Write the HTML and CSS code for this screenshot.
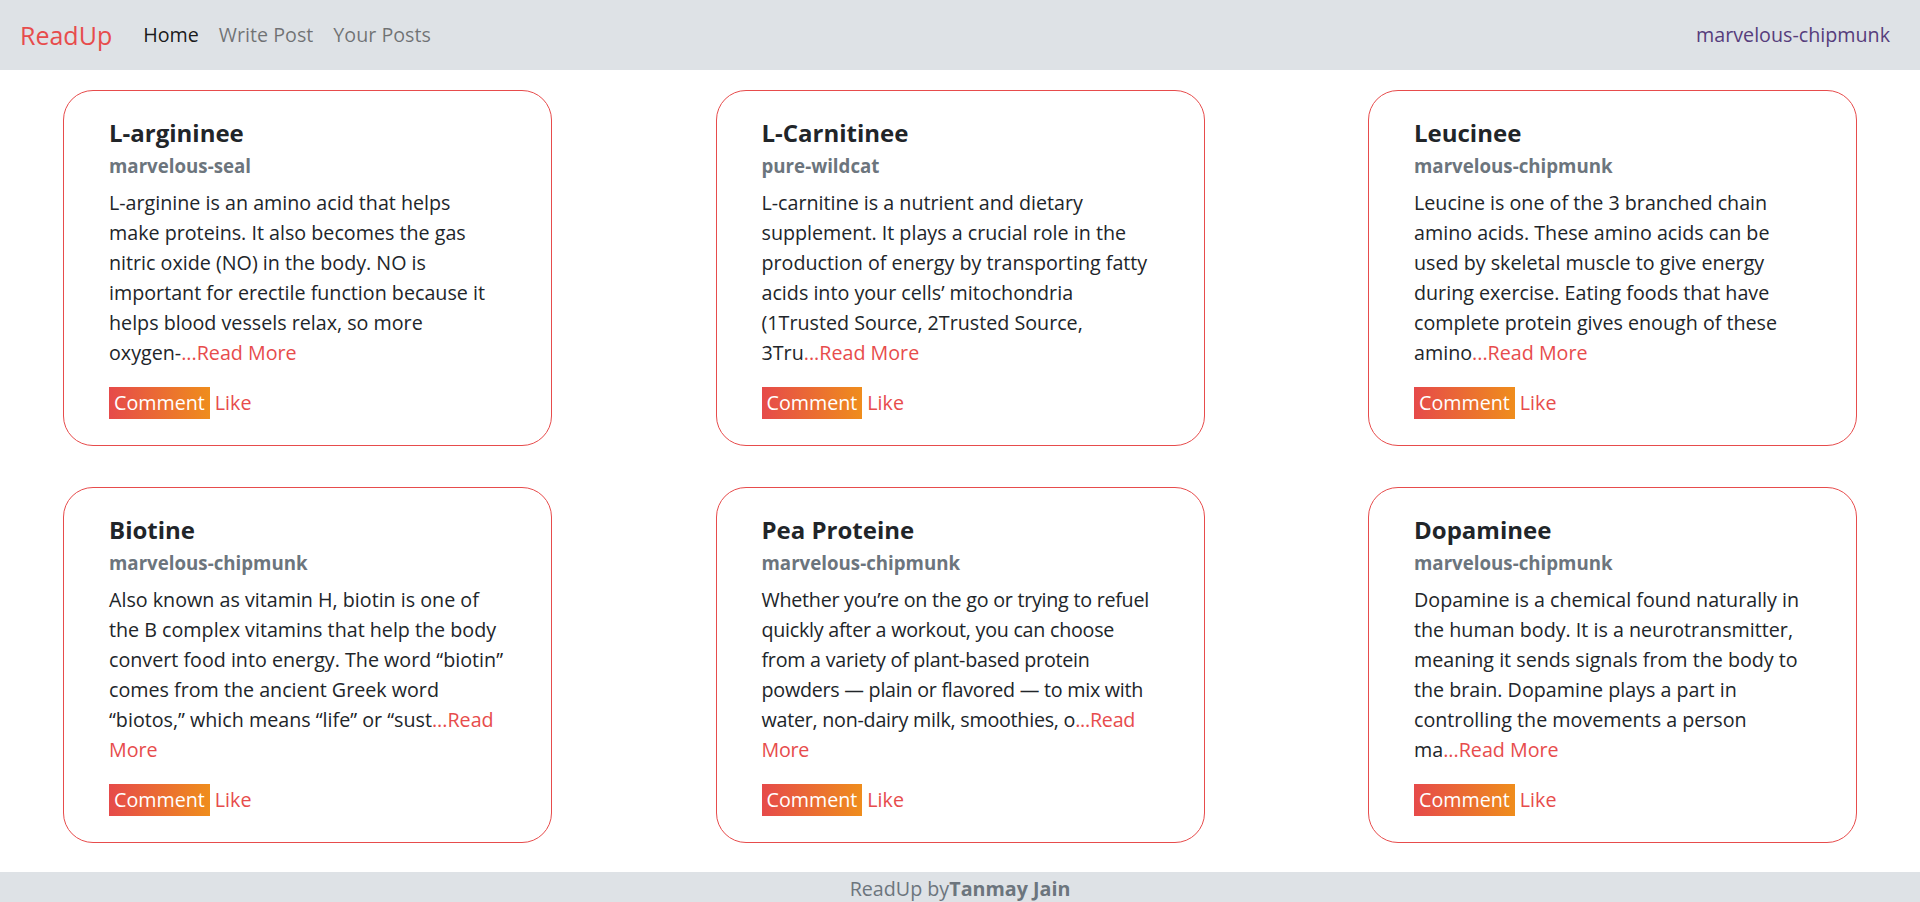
FILE: index.html
```html
<!DOCTYPE html>
<html lang="en">
<head>
<meta charset="utf-8">
<title>ReadUp</title>
<link rel="stylesheet" href="styles.css">
</head>
<body>
<nav class="navbar">
  <a class="brand" href="#">ReadUp</a>
  <ul class="nav-links">
    <li><a class="nav-link active" href="#">Home</a></li>
    <li><a class="nav-link" href="#">Write Post</a></li>
    <li><a class="nav-link" href="#">Your Posts</a></li>
  </ul>
  <a class="user" href="#">marvelous-chipmunk</a>
</nav>
<main class="posts">
  <article class="card">
    <h5 class="card-title">L-argininee</h5>
    <h6 class="card-author">marvelous-seal</h6>
    <p class="card-text">L-arginine is an amino acid that helps make proteins. It also becomes the gas nitric oxide (NO) in the body. NO is important for erectile function because it helps blood vessels relax, so more oxygen-<a class="more" href="#">...Read More</a></p>
    <div class="actions"><button class="btn-comment">Comment</button><a class="like" href="#">Like</a></div>
  </article>
  <article class="card">
    <h5 class="card-title">L-Carnitinee</h5>
    <h6 class="card-author">pure-wildcat</h6>
    <p class="card-text">L-carnitine is a nutrient and dietary supplement. It plays a crucial role in the production of energy by transporting fatty acids into your cells’ mitochondria (1Trusted Source, 2Trusted Source, 3Tru<a class="more" href="#">...Read More</a></p>
    <div class="actions"><button class="btn-comment">Comment</button><a class="like" href="#">Like</a></div>
  </article>
  <article class="card">
    <h5 class="card-title">Leucinee</h5>
    <h6 class="card-author">marvelous-chipmunk</h6>
    <p class="card-text">Leucine is one of the 3 branched chain amino acids. These amino acids can be used by skeletal muscle to give energy during exercise. Eating foods that have complete protein gives enough of these amino<a class="more" href="#">...Read More</a></p>
    <div class="actions"><button class="btn-comment">Comment</button><a class="like" href="#">Like</a></div>
  </article>
  <article class="card">
    <h5 class="card-title">Biotine</h5>
    <h6 class="card-author">marvelous-chipmunk</h6>
    <p class="card-text">Also known as vitamin H, biotin is one of the B complex vitamins that help the body convert food into energy. The word “biotin” comes from the ancient Greek word “biotos,” which means “life” or “sust<a class="more" href="#">...Read More</a></p>
    <div class="actions"><button class="btn-comment">Comment</button><a class="like" href="#">Like</a></div>
  </article>
  <article class="card">
    <h5 class="card-title">Pea Proteine</h5>
    <h6 class="card-author">marvelous-chipmunk</h6>
    <p class="card-text card-text--snug">Whether you’re on the go or trying to refuel quickly after a workout, you can choose from a variety of plant-based protein powders — plain or flavored — to mix with water, non-dairy milk, smoothies, o<a class="more" href="#">...Read More</a></p>
    <div class="actions"><button class="btn-comment">Comment</button><a class="like" href="#">Like</a></div>
  </article>
  <article class="card">
    <h5 class="card-title">Dopaminee</h5>
    <h6 class="card-author">marvelous-chipmunk</h6>
    <p class="card-text">Dopamine is a chemical found naturally in the human body. It is a neurotransmitter, meaning it sends signals from the body to the brain. Dopamine plays a part in controlling the movements a person ma<a class="more" href="#">...Read More</a></p>
    <div class="actions"><button class="btn-comment">Comment</button><a class="like" href="#">Like</a></div>
  </article>
</main>
<footer class="footer">ReadUp by<strong>Tanmay Jain</strong></footer>
</body>
</html>
```
FILE: styles.css
```css
* { box-sizing: border-box; }
html, body { margin: 0; padding: 0; }
body {
  font-family: "Open Sans", "Noto Sans", sans-serif;
  font-size: 19.7px;
  line-height: 30px;
  color: #212529;
  background: #fff;
}
a { text-decoration: none; }

.navbar {
  height: 70px;
  background: #dee2e6;
  display: flex;
  align-items: center;
  padding: 0 30px 0 20px;
}
.brand {
  font-size: 25px;
  color: #e74c4c;
  margin-right: 21px;
}
.nav-links {
  display: flex;
  list-style: none;
  margin: 0;
  padding: 0;
  flex: 1;
}
.nav-link {
  display: block;
  padding: 0 10px;
  color: rgba(0, 0, 0, 0.5);
}
.nav-link.active { color: rgba(0, 0, 0, 0.9); }
.user { color: #563d7c; }

.posts {
  display: grid;
  grid-template-columns: repeat(3, 489px);
  justify-content: space-between;
  row-gap: 41px;
  padding: 20px 63px 29px;
}
.card {
  border: 1px solid #e74c4c;
  border-radius: 30px;
  padding: 27px 45px 26px;
  display: flex;
  flex-direction: column;
}
.card-title {
  margin: 0 0 6px;
  font-size: 24px;
  line-height: 30px;
  font-weight: 700;
  color: #212529;
}
.card-author {
  margin: 0 0 10px;
  font-size: 18.7px;
  line-height: 24px;
  font-weight: 700;
  color: #6c757d;
}
.card-text {
  margin: 0 0 19px;
}
.card-text--snug { letter-spacing: -0.25px; }
.more, .like { color: #e74c4c; }
.actions {
  display: flex;
  align-items: center;
  margin-top: auto;
}
.btn-comment {
  font: inherit;
  line-height: 32px;
  height: 32px;
  padding: 0 5px;
  border: 0;
  color: #fff;
  background: linear-gradient(to right, #e64a4a, #ef8d1c);
  margin-right: 5px;
}
.like { line-height: 32px; }
.footer {
  background: #dee2e6;
  color: #6c757d;
  text-align: center;
  padding: 2px 0 10px;
}
.footer strong { font-weight: 700; }
```
